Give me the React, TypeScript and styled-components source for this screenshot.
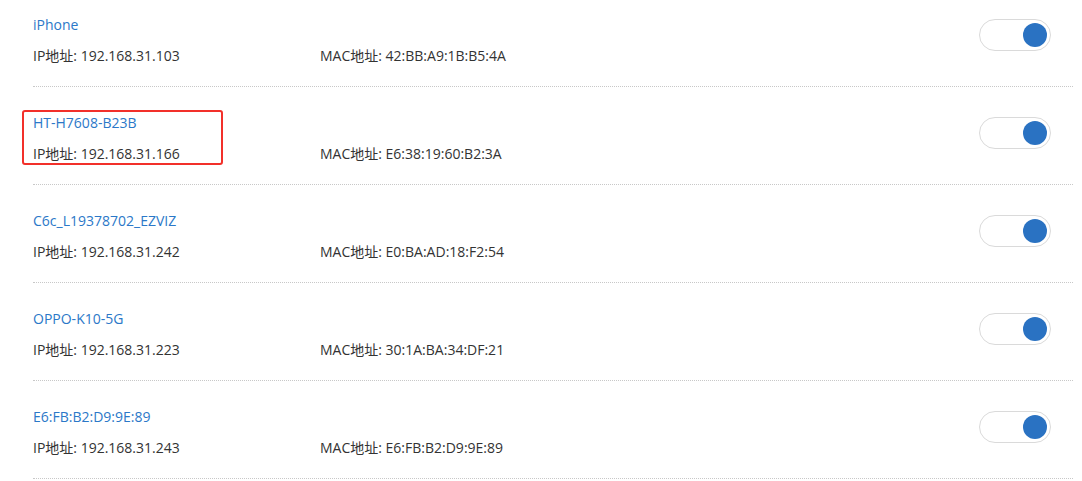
import React from "react";
import styled, { createGlobalStyle } from "styled-components";

const Global = createGlobalStyle`
  html, body { margin: 0; padding: 0; background: #fff; }
  body {
    font-family: "Open Sans", "Noto Sans CJK SC", sans-serif;
    font-size: 14px;
    color: #333;
    overflow: hidden;
  }
`;

const Page = styled.div`
  position: relative;
  width: 1082px;
  height: 481px;
  overflow: hidden;
`;

const List = styled.div`
  display: flex;
  flex-direction: column;
  padding: 0 9px 0 33px;
  margin-top: -11px;
`;

const Row = styled.div`
  display: flex;
  align-items: center;
  height: 98px;
  box-sizing: border-box;
  border-bottom: 1px dotted #c8c8c8;
`;

const Info = styled.div`
  flex: 1;
  display: flex;
  flex-direction: column;
  padding-top: 5px;
`;

const Name = styled.div`
  color: #2b78c8;
  line-height: 20px;
  height: 20px;
`;

const Details = styled.div`
  display: flex;
  line-height: 20px;
  margin-top: 11px;
`;

const Ip = styled.span`
  width: 287px;
`;

const Mac = styled.span``;

const Toggle = styled.div`
  width: 72px;
  height: 32px;
  box-sizing: border-box;
  border: 1px solid #dadada;
  border-radius: 16px;
  display: flex;
  align-items: center;
  justify-content: flex-end;
  padding-right: 3px;
  margin-right: 22px;
  margin-top: -5px;
  background: #fff;
`;

const Knob = styled.div`
  width: 24px;
  height: 24px;
  border-radius: 50%;
  background: #2a72c2;
`;

const Highlight = styled.div`
  position: absolute;
  left: 22px;
  top: 110px;
  width: 201px;
  height: 55px;
  box-sizing: border-box;
  border: 2px solid #f2302a;
  border-radius: 3px;
  pointer-events: none;
`;

const devices = [
  { name: "iPhone", ip: "192.168.31.103", mac: "42:BB:A9:1B:B5:4A" },
  { name: "HT-H7608-B23B", ip: "192.168.31.166", mac: "E6:38:19:60:B2:3A" },
  { name: "C6c_L19378702_EZVIZ", ip: "192.168.31.242", mac: "E0:BA:AD:18:F2:54" },
  { name: "OPPO-K10-5G", ip: "192.168.31.223", mac: "30:1A:BA:34:DF:21" },
  { name: "E6:FB:B2:D9:9E:89", ip: "192.168.31.243", mac: "E6:FB:B2:D9:9E:89" },
];

export default function App() {
  return (
    <Page>
      <Global />
      <List>
        {devices.map((d) => (
          <Row key={d.name}>
            <Info>
              <Name>{d.name}</Name>
              <Details>
                <Ip>IP地址: {d.ip}</Ip>
                <Mac>MAC地址: {d.mac}</Mac>
              </Details>
            </Info>
            <Toggle>
              <Knob />
            </Toggle>
          </Row>
        ))}
      </List>
      <Highlight />
    </Page>
  );
}
